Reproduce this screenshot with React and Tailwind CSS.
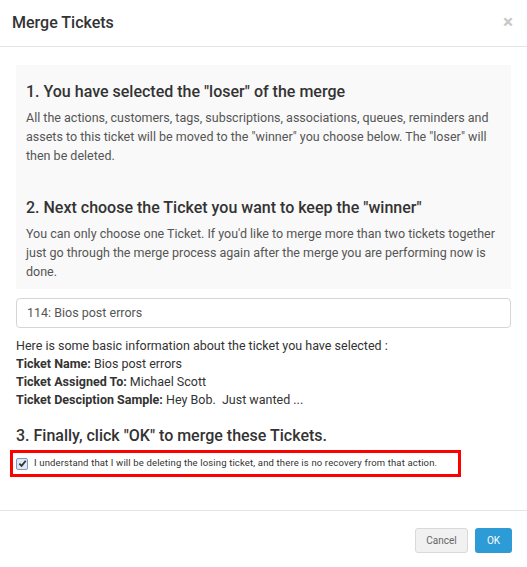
import React from "react";

const App = () => {
  return (
    <div className="w-[527px] h-[567px] bg-white text-[#333] font-['Roboto',sans-serif] overflow-hidden">
      {/* Header */}
      <div className="h-[47px] flex items-center justify-between pl-3 pr-[14px] border-b border-[#e5e5e5]">
        <h4 className="text-[16px] font-medium text-[#333]">Merge Tickets</h4>
        <span className="text-[19px] leading-none font-bold text-[#c8c8c8] -mt-[4px]">×</span>
      </div>

      {/* Body */}
      <div className="px-4">
        <div className="mt-[18px] bg-[#f9f9f9] px-[10px] pt-[15px] pb-[8px]">
          <h3 className="text-[16px] leading-[24px] font-medium text-[#333]">1. You have selected the "loser" of the merge</h3>
          <p className="mt-[4px] text-[12.5px] leading-[19px] text-[#555]">
            All the actions, customers, tags, subscriptions, associations, queues, reminders and assets to this ticket will be moved to the "winner" you choose below. The "loser" will then be deleted.
          </p>
          <h3 className="mt-[31px] text-[16px] leading-[24px] font-medium text-[#333]">2. Next choose the Ticket you want to keep the "winner"</h3>
          <p className="mt-[4px] text-[12.5px] leading-[19px] text-[#555]">
            You can only choose one Ticket. If you'd like to merge more than two tickets together just go through the merge process again after the merge you are performing now is done.
          </p>
        </div>

        <div className="mt-[9px] h-[30px] border border-[#d5d5d5] rounded-[4px] flex items-center px-[10px] text-[12.5px] text-[#555]">
          114: Bios post errors
        </div>

        <div className="mt-[9px] text-[12.5px] leading-[18px] text-[#333]">
          <div>Here is some basic information about the ticket you have selected :</div>
          <div><span className="font-bold">Ticket Name:</span> Bios post errors</div>
          <div><span className="font-bold">Ticket Assigned To:</span> Michael Scott</div>
          <div><span className="font-bold">Ticket Desciption Sample:</span> Hey Bob.&nbsp; Just wanted ...</div>
        </div>

        <h3 className="mt-[15px] text-[16px] leading-[24px] font-medium text-[#333]">3. Finally, click "OK" to merge these Tickets.</h3>
      </div>

      <div className="mt-[2px] ml-[10px] w-[451px] h-[27px] border-[3px] border-[#ff0000] flex items-center pl-[3px] gap-[6px]">
        <span className="w-[12px] h-[12px] border border-[#7a9cc4] bg-[#dfe8f3] rounded-[2px] flex items-center justify-center">
          <svg width="9" height="9" viewBox="0 0 10 10">
            <path d="M1.5 5.2 L4 7.6 L8.6 2" fill="none" stroke="#333" strokeWidth="2" />
          </svg>
        </span>
        <span className="text-[9.5px] text-[#333] tracking-[0.15px]">
          I understand that I will be deleting the losing ticket, and there is no recovery from that action.
        </span>
      </div>

      {/* Footer */}
      <div className="mt-[33px] border-t border-[#e5e5e5] flex justify-end gap-[7px] pr-[15px] pt-[17px]">
        <button className="h-[25px] w-[53px] bg-[#f1f1f1] border border-[#d9d9d9] rounded-[3px] text-[10px] text-[#666]">
          Cancel
        </button>
        <button className="h-[25px] w-[37px] bg-[#2d9bd6] rounded-[3px] text-[10px] text-white">
          OK
        </button>
      </div>
    </div>
  );
};

export default App;
